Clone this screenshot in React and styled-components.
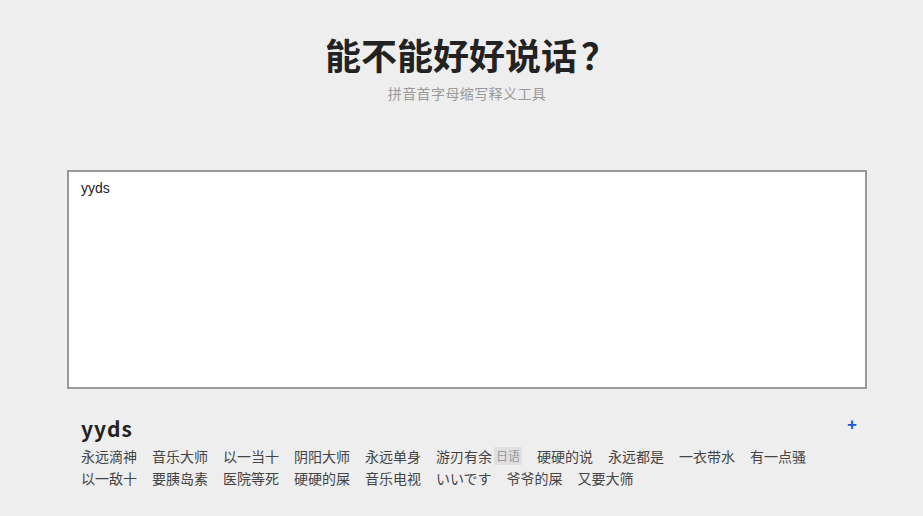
import React, { useState } from 'react';
import styled, { createGlobalStyle } from 'styled-components';

const GlobalStyle = createGlobalStyle`
  html, body {
    margin: 0;
    padding: 0;
    background: #eeeeee;
  }
  body {
    font-family: "Noto Sans CJK SC", "Liberation Sans", sans-serif;
    color: #333;
  }
`;

const tags = [
  { text: '永远滴神' },
  { text: '音乐大师' },
  { text: '以一当十' },
  { text: '阴阳大师' },
  { text: '永远单身' },
  { text: '游刃有余', lang: '日语' },
  { text: '硬硬的说' },
  { text: '永远都是' },
  { text: '一衣带水' },
  { text: '有一点骚' },
  { text: '以一敌十' },
  { text: '要胰岛素' },
  { text: '医院等死' },
  { text: '硬硬的屎' },
  { text: '音乐电视' },
  { text: 'いいです' },
  { text: '爷爷的屎' },
  { text: '又要大筛' },
];

const App = () => {
  const [value, setValue] = useState('yyds');

  return (
    <>
      <GlobalStyle />
      <Page>
        <Container>
          <Header>
            <Title>能不能好好说话<Mark>？</Mark></Title>
            <Subtitle>拼音首字母缩写释义工具</Subtitle>
          </Header>

          <Input value={value} onChange={e => setValue(e.target.value)} />

          <Result>
            <ResultHead>
              <Word>yyds</Word>
              <AddButton>+</AddButton>
            </ResultHead>
            <TagList>
              {tags.map((tag, index) => (
                <Tag key={index}>
                  {tag.text}
                  {tag.lang && <Lang>{tag.lang}</Lang>}
                </Tag>
              ))}
            </TagList>
          </Result>
        </Container>
      </Page>
    </>
  );
};

const Page = styled.div`
  min-height: 516px;
  padding-left: 11px;
  box-sizing: border-box;
`;

const Container = styled.div`
  width: 800px;
  margin: 0 auto;
`;

const Header = styled.header`
  padding-top: 31px;
  text-align: center;
`;

const Title = styled.h1`
  margin: 0;
  font-size: 36px;
  line-height: 46px;
  font-weight: 700;
  color: #222;
  padding-left: 8px;
`;

const Mark = styled.span`
  display: inline-block;
  margin-left: 4px;
`;

const Subtitle = styled.p`
  margin: 6px 0 0;
  font-size: 14px;
  line-height: 20px;
  color: #999;
  letter-spacing: 0.4px;
`;

const Input = styled.textarea`
  display: block;
  width: 800px;
  height: 219px;
  margin-top: 67px;
  padding: 7px 12px;
  box-sizing: border-box;
  border: 2px solid #999;
  background: #fff;
  font-family: "Liberation Sans", Arial, sans-serif;
  font-size: 14px;
  line-height: 18px;
  color: #222;
  resize: none;
  outline: none;
`;

const Result = styled.section`
  padding: 24px 10px 0 14px;
`;

const ResultHead = styled.div`
  display: flex;
  justify-content: space-between;
  align-items: center;
  height: 30px;
`;

const Word = styled.h2`
  margin: 0;
  font-size: 21px;
  line-height: 30px;
  font-weight: 700;
  color: #222;
  letter-spacing: 1px;
`;

const AddButton = styled.button`
  border: none;
  background: none;
  padding: 0;
  margin-top: -6px;
  font-family: "Liberation Sans", Arial, sans-serif;
  font-size: 17px;
  font-weight: 700;
  color: #1a56d6;
  cursor: pointer;
`;

const TagList = styled.div`
  display: flex;
  flex-wrap: wrap;
  column-gap: 15px;
  margin-top: 2px;
`;

const Tag = styled.span`
  display: inline-flex;
  align-items: center;
  font-size: 14px;
  line-height: 22px;
  color: #444;
`;

const Lang = styled.span`
  margin-left: 2px;
  padding: 0 2px;
  font-size: 12px;
  line-height: 18px;
  color: #999;
  background: #e0e0e0;
`;

export default App;
